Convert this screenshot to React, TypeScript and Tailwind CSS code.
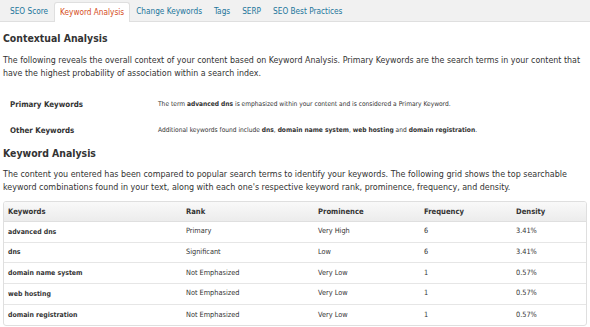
const tabs = [
  { label: 'SEO Score', active: false },
  { label: 'Keyword Analysis', active: true },
  { label: 'Change Keywords', active: false },
  { label: 'Tags', active: false },
  { label: 'SERP', active: false },
  { label: 'SEO Best Practices', active: false },
];

const rows = [
  ['advanced dns', 'Primary', 'Very High', '6', '3.41%'],
  ['dns', 'Significant', 'Low', '6', '3.41%'],
  ['domain name system', 'Not Emphasized', 'Very Low', '1', '0.57%'],
  ['web hosting', 'Not Emphasized', 'Very Low', '1', '0.57%'],
  ['domain registration', 'Not Emphasized', 'Very Low', '1', '0.57%'],
];

const grid = 'grid grid-cols-[177px_132px_106px_92px_1fr]';

export default function App() {
  return (
    <div className="w-[590px] h-[327px] overflow-hidden bg-white text-[#333] [font-family:DejaVu_Sans_Condensed,sans-serif]">
      <div className="h-[22px] bg-[#f1f1f1] border-b border-[#dfdfdf] flex items-end pl-[4px]">
        {tabs.map((t) => (
          <div
            key={t.label}
            className={
              t.active
                ? 'h-[20px] -mb-px px-[5px] flex items-center bg-white border border-b-0 border-[#dfdfdf] rounded-t-[3px] text-[#d54e21] text-[8.2px]'
                : 'h-[20px] px-[5px] flex items-center border border-transparent text-[#21759b] text-[8.2px]'
            }
          >
            {t.label}
          </div>
        ))}
      </div>

      <div className="px-[3px]">
        <h2 className="mt-[9px] text-[10.4px] font-bold leading-[15px] text-[#333]">Contextual Analysis</h2>
        <p className="mt-[8px] text-[8.8px] leading-[13px] whitespace-nowrap">
          The following reveals the overall context of your content based on Keyword Analysis. Primary Keywords are the search terms in your content that
          <br />
          have the highest probability of association within a search index.
        </p>

        <div className="mt-[12px] flex flex-col">
          <div className="flex items-center h-[26px]">
            <div className="w-[155px] pl-[7px] text-[7.9px] font-bold">Primary Keywords</div>
            <div className="text-[6.6px] whitespace-nowrap">
              The term <b>advanced dns</b> is emphasized within your content and is considered a Primary Keyword.
            </div>
          </div>
          <div className="flex items-center h-[26px]">
            <div className="w-[155px] pl-[7px] text-[7.9px] font-bold">Other Keywords</div>
            <div className="text-[6.6px] whitespace-nowrap">
              Additional keywords found include <b>dns</b>, <b>domain name system</b>, <b>web hosting</b> and <b>domain registration</b>.
            </div>
          </div>
        </div>

        <h2 className="mt-[2px] text-[10.4px] font-bold leading-[15px] text-[#333]">Keyword Analysis</h2>
        <p className="mt-[7px] text-[8.9px] leading-[13px] whitespace-nowrap">
          The content you entered has been compared to popular search terms to identify your keywords. The following grid shows the top searchable
          <br />
          keyword combinations found in your text, along with each one's respective keyword rank, prominence, frequency, and density.
        </p>

        <div className="mt-[7px] border border-[#dfdfdf] rounded-[3px] overflow-hidden">
          <div className={`${grid} h-[20px] items-center bg-gradient-to-b from-[#f9f9f9] to-[#ececec] border-b border-[#dfdfdf] text-[7.6px] font-bold`}>
            {['Keywords', 'Rank', 'Prominence', 'Frequency', 'Density'].map((h, i) => (
              <div key={h} className={i === 0 ? 'pl-[4px]' : 'pl-[5px]'}>{h}</div>
            ))}
          </div>
          {rows.map((r, i) => (
            <div
              key={r[0]}
              className={`${grid} h-[20.7px] items-center text-[7.3px] ${i < rows.length - 1 ? 'border-b border-[#e6e6e6]' : ''}`}
            >
              <div className="pl-[4px] font-bold text-[6.9px]">{r[0]}</div>
              <div className="pl-[5px]">{r[1]}</div>
              <div className="pl-[5px]">{r[2]}</div>
              <div className="pl-[5px]">{r[3]}</div>
              <div className="pl-[5px]">{r[4]}</div>
            </div>
          ))}
        </div>
      </div>
    </div>
  );
}
